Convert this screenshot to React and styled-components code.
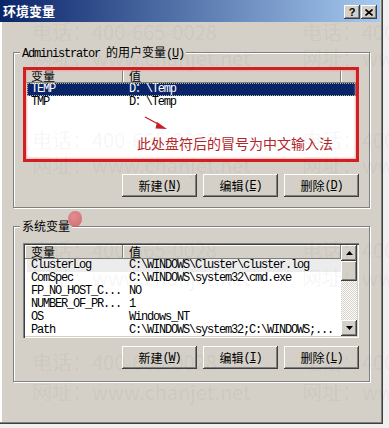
import React from 'react';
import styled, { createGlobalStyle } from 'styled-components';

const CJK = `"Noto Sans CJK SC", "Noto Sans", sans-serif`;
const MONO = `"Liberation Mono", "Noto Sans CJK SC", monospace`;

const GlobalStyle = createGlobalStyle`
  html, body { margin: 0; padding: 0; background: #f0f0f0; }
  body { width: 389px; height: 428px; overflow: hidden; font-family: ${CJK}; }
`;

const raised = `box-shadow: inset -1px -1px #404040, inset 1px 1px #ffffff, inset -2px -2px #808080, inset 2px 2px #d4d0c8;`;

const Page = styled.div`
  position: relative;
  width: 389px;
  height: 428px;
`;

const Window = styled.div`
  width: 383px;
  height: 424px;
  box-sizing: border-box;
  background: #d4d0c8;
  padding: 0 3px 3px 0;
  box-shadow: inset -1px -1px #404040, inset -2px -2px #808080, inset 2px 0 #ffffff;
  display: flex;
  flex-direction: column;
`;

const TitleBar = styled.div`
  height: 22px;
  flex: none;
  background: linear-gradient(to right, #0a246a, #a6caf0);
  display: flex;
  align-items: center;
  justify-content: space-between;
  padding: 0 3px 0 3px;
`;

const Title = styled.span`
  color: #ffffff;
  font: bold 13px ${CJK};
  line-height: 22px;
`;

const TitleButtons = styled.div`
  display: flex;
  gap: 1px;
  padding-top: 2px;
`;

const TitleButton = styled.div`
  width: 16px;
  height: 14px;
  background: #d4d0c8;
  ${raised}
  display: flex;
  align-items: center;
  justify-content: center;
  font: bold 11px "Liberation Sans", sans-serif;
  color: #000;
`;

const Content = styled.div`
  padding: 21px 10px 0 13px;
  display: flex;
  flex-direction: column;
  gap: 9px;
`;

const Group = styled.fieldset`
  margin: 0;
  min-width: 0;
  padding: ${(p) => p.$pad};
  border: 1px solid #808080;
  box-shadow: 1px 1px 0 #ffffff, inset 1px 1px 0 #ffffff;
  display: flex;
  flex-direction: column;
  gap: ${(p) => p.$gap}px;
`;

const Legend = styled.legend`
  position: relative;
  margin-left: -3px;
  padding: 0 2px;
  background: #d4d0c8;
  font: 12px ${MONO};
  letter-spacing: -1.2px;
  line-height: 13px;
  color: #000;
`;

const Cn = styled.span`
  font: 12px ${CJK};
  letter-spacing: 0;
`;

const Blob = styled.span`
  position: absolute;
  left: calc(100% - 4px);
  top: -6px;
  width: 14px;
  height: 16px;
  border-radius: 50% 45% 50% 50%;
  background: radial-gradient(circle at 40% 35%, rgba(230, 130, 135, 0.85), rgba(205, 80, 90, 0.8));
`;

const ListView = styled.div`
  position: relative;
  height: 95px;
  box-sizing: border-box;
  background: #ffffff;
  padding: 2px;
  box-shadow: inset 1px 1px #808080, inset 2px 2px #404040, inset -1px -1px #ffffff, inset -2px -2px #d4d0c8;
  display: grid;
  grid-template-columns: 1fr ${(p) => (p.$scroll ? '16px' : '0px')};
  overflow: hidden;
  ${(p) =>
    p.$marked &&
    `&::after {
      content: '';
      position: absolute;
      inset: 0;
      border: 3px solid #d21f22;
      box-shadow: 0 0 2px 1px rgba(240, 150, 150, 0.7), inset 0 0 2px 1px rgba(240, 160, 160, 0.8);
      pointer-events: none;
    }`}
`;

const Table = styled.div`
  display: flex;
  flex-direction: column;
  overflow: hidden;
  min-width: 0;
`;

const Header = styled.div`
  display: grid;
  grid-template-columns: 98px 218px 1fr;
  height: 14px;
  flex: none;
`;

const HeadCell = styled.div`
  background: #d4d0c8;
  box-shadow: inset -1px -1px #808080, inset 1px 1px #ffffff;
  font: 12px ${CJK};
  line-height: 14px;
  padding-left: 6px;
  color: #000;
`;

const Row = styled.div`
  display: grid;
  grid-template-columns: 96px 218px;
  height: 13px;
  flex: none;
  margin-left: 2px;
  box-sizing: border-box;
  font: 12px ${MONO};
  letter-spacing: -1.2px;
  line-height: 13px;
  color: ${(p) => (p.$sel ? '#ffffff' : '#000000')};
  background: ${(p) => (p.$sel ? '#0a246a' : p.$hot ? '#ececec' : 'transparent')};
  outline: ${(p) => (p.$sel ? '1px dotted #b8b48a' : 'none')};
  outline-offset: -1px;
`;

const Cell = styled.div`
  padding-left: ${(p) => p.$pad}px;
  white-space: pre;
  overflow: hidden;
`;

const Scrollbar = styled.div`
  display: flex;
  flex-direction: column;
  background-color: #ffffff;
  background-image: conic-gradient(#ffffff 25%, #d4d0c8 0 50%, #ffffff 0 75%, #d4d0c8 0);
  background-size: 2px 2px;
`;

const ScrollButton = styled.div`
  height: 16px;
  flex: none;
  background: #d4d0c8;
  ${raised}
  display: flex;
  align-items: center;
  justify-content: center;
`;

const Thumb = styled.div`
  height: 20px;
  flex: none;
  background: #d4d0c8;
  ${raised}
`;

const Track = styled.div`
  flex: 1;
`;

const ButtonRow = styled.div`
  display: flex;
  justify-content: flex-end;
  gap: 6px;
`;

const Button = styled.div`
  width: 75px;
  height: 23px;
  box-sizing: border-box;
  background: #d4d0c8;
  ${raised}
  display: flex;
  align-items: center;
  justify-content: center;
  font: 12px ${MONO};
  letter-spacing: -1.2px;
  color: #000;
`;

const Note = styled.div`
  position: absolute;
  left: 114px;
  top: 67px;
  font: 14px ${CJK};
  line-height: 18px;
  color: #b3262a;
  white-space: nowrap;
  pointer-events: none;
`;

const Arrow = styled.svg`
  position: absolute;
  left: 120px;
  top: 48px;
  pointer-events: none;
`;

const Watermarks = styled.div`
  position: absolute;
  inset: 0;
  pointer-events: none;
  overflow: hidden;
`;

const Mark = styled.span`
  position: absolute;
  left: ${(p) => p.$x}px;
  top: ${(p) => p.$y}px;
  font: 20px ${CJK};
  line-height: 24px;
  color: rgba(0, 0, 0, 0.055);
  white-space: nowrap;
`;

const Key = ({ k }) => (
  <span>
    (<u>{k}</u>)
  </span>
);

const userVars = [
  { n: 'TEMP', v: 'D：\\Temp', sel: true },
  { n: 'TMP', v: 'D：\\Temp' },
];

const sysVars = [
  { n: 'ClusterLog', v: 'C:\\WINDOWS\\Cluster\\cluster.log', hot: true },
  { n: 'ComSpec', v: 'C:\\WINDOWS\\system32\\cmd.exe' },
  { n: 'FP_NO_HOST_C...', v: 'NO' },
  { n: 'NUMBER_OF_PR...', v: '1' },
  { n: 'OS', v: 'Windows_NT' },
  { n: 'Path', v: 'C:\\WINDOWS\\system32;C:\\WINDOWS;...' },
];

const marks = [];
[20, 128, 238, 350].forEach((y) => {
  marks.push({ x: 32, y, t: '电话：400-665-0028' });
  marks.push({ x: 302, y, t: '电话：400-665-0028' });
});
[46, 153, 266, 380].forEach((y) => {
  marks.push({ x: 32, y, t: '网址：www.chanjet.net' });
  marks.push({ x: 302, y, t: '网址：www.chanjet.net' });
});

const Buttons = ({ keys }) => (
  <ButtonRow>
    <Button>
      <Cn>新建</Cn>
      <Key k={keys[0]} />
    </Button>
    <Button>
      <Cn>编辑</Cn>
      <Key k={keys[1]} />
    </Button>
    <Button>
      <Cn>删除</Cn>
      <Key k={keys[2]} />
    </Button>
  </ButtonRow>
);

const ListHeader = () => (
  <Header>
    <HeadCell>变量</HeadCell>
    <HeadCell>值</HeadCell>
    <HeadCell />
  </Header>
);

const Triangle = ({ down }) => (
  <svg width="7" height="4" viewBox="0 0 7 4">
    <path d={down ? 'M0 0H7L3.5 4Z' : 'M3.5 0L7 4H0Z'} fill="#000" />
  </svg>
);

export default function App() {
  return (
    <Page>
      <GlobalStyle />
      <Window>
        <TitleBar>
          <Title>环境变量</Title>
          <TitleButtons>
            <TitleButton>?</TitleButton>
            <TitleButton>
              <svg width="8" height="7" viewBox="0 0 8 7">
                <path d="M0.5 0.5L7.5 6.5M7.5 0.5L0.5 6.5" stroke="#000" strokeWidth="1.6" />
              </svg>
            </TitleButton>
          </TitleButtons>
        </TitleBar>
        <Content>
          <Group $pad="6px 10px 10px 9px" $gap={12}>
            <Legend>
              Administrator <Cn>的用户变量</Cn>
              <Key k="U" />
            </Legend>
            <ListView $marked>
              <Table>
                <ListHeader />
                {userVars.map((r) => (
                  <Row key={r.n} $sel={r.sel}>
                    <Cell $pad={4}>{r.n}</Cell>
                    <Cell $pad={6}>{r.v}</Cell>
                  </Row>
                ))}
              </Table>
              <div />
              <Arrow width="26" height="16" viewBox="0 0 26 16">
                <path d="M2 2L17 10" stroke="#c42026" strokeWidth="1.3" />
                <path d="M14 7L24 14L12.5 13.5Z" fill="#c42026" />
              </Arrow>
              <Note>此处盘符后的冒号为中文输入法</Note>
            </ListView>
            <Buttons keys={['N', 'E', 'D']} />
          </Group>
          <Group $pad="8px 10px 12px 9px" $gap={8}>
            <Legend>
              <Cn>系统变量</Cn>
              <Blob />
            </Legend>
            <ListView $scroll>
              <Table>
                <ListHeader />
                {sysVars.map((r) => (
                  <Row key={r.n} $hot={r.hot}>
                    <Cell $pad={4}>{r.n}</Cell>
                    <Cell $pad={6}>{r.v}</Cell>
                  </Row>
                ))}
              </Table>
              <Scrollbar>
                <ScrollButton>
                  <Triangle />
                </ScrollButton>
                <Thumb />
                <Track />
                <ScrollButton>
                  <Triangle down />
                </ScrollButton>
              </Scrollbar>
            </ListView>
            <Buttons keys={['W', 'I', 'L']} />
          </Group>
        </Content>
      </Window>
      <Watermarks>
        {marks.map((m, i) => (
          <Mark key={i} $x={m.x} $y={m.y}>
            {m.t}
          </Mark>
        ))}
      </Watermarks>
    </Page>
  );
}
